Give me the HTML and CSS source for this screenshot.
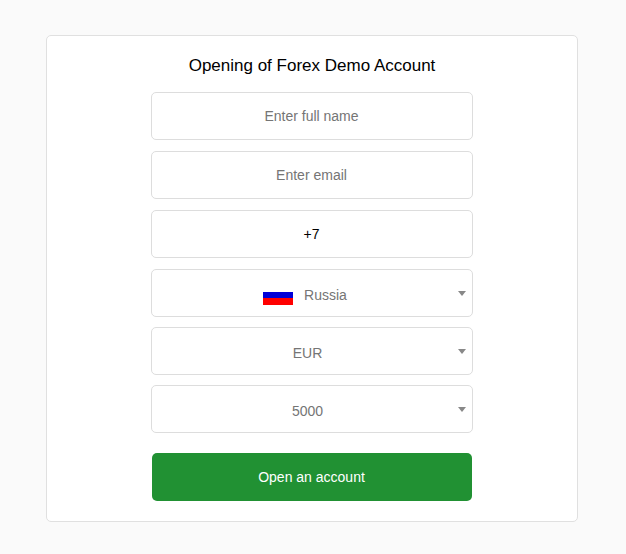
FILE: index.html
```
<!DOCTYPE html>
<html lang="en">
<head>
  <meta charset="UTF-8">
  <meta name="viewport" content="width=device-width, initial-scale=1.0">
  <title>Opening of Forex Demo Account</title>
  <link rel="stylesheet" href="styles.css">
</head>
<body>
  <div class="container">
    <h1>Opening of Forex Demo Account</h1>
    <form class="account-form">
      <input type="text" name="name" placeholder="Enter full name">
      <input type="email" name="email" placeholder="Enter email">
      <input type="tel" name="phone" value="+7">

      <div class="select select-country">
        <span class="flag"></span>
        <span class="select-text">Russia</span>
        <span class="arrow"></span>
      </div>
      <div class="select">
        <span class="select-text">EUR</span>
        <span class="arrow"></span>
      </div>
      <div class="select">
        <span class="select-text">5000</span>
        <span class="arrow"></span>
      </div>

      <button type="submit">Open an account</button>
    </form>
  </div>
</body>
</html>
```

FILE: styles.css
```
* {
  box-sizing: border-box;
}
body {
  font-family: "Liberation Sans", Arial, sans-serif;
  background-color: #fafafa;
  margin: 0;
  padding: 35px 48px 32px 46px;
}
.container {
  background-color: #fff;
  height: 487px;
  padding: 20px 104px 0;
  border: 1px solid #e0e0e0;
  border-radius: 5px;
}
h1 {
  margin: 0 0 16px;
  font-size: 17px;
  font-weight: normal;
  line-height: 20px;
  text-align: center;
  color: #000;
}
.account-form {
  display: flex;
  flex-direction: column;
}
input, .select {
  width: 322px;
  height: 48px;
  border: 1px solid #ddd;
  border-radius: 5px;
  background-color: #fff;
  font-size: 14px;
}
input {
  margin: 0 0 11px;
  padding: 0 1px 0 0;
  font-family: inherit;
  text-align: center;
  color: #000;
}
input::placeholder {
  color: #757575;
}
.select {
  display: flex;
  align-items: center;
  justify-content: center;
  position: relative;
  margin-bottom: 10px;
  padding: 4px 9px 0 0;
  color: #757575;
}
.select-country {
  padding-right: 14px;
}
.flag {
  width: 30px;
  height: 20px;
  margin-right: 11px;
  background: linear-gradient(#fff 7px, #0000d8 7px 13px, #f00 13px);
}
.arrow {
  position: absolute;
  top: 21px;
  right: 6px;
  border: 4px solid transparent;
  border-top: 5px solid #888;
  border-bottom: 0;
}
button {
  width: 320px;
  height: 48px;
  margin: 10px 1px 0;
  padding: 0 1px 0 0;
  border: none;
  border-radius: 5px;
  background-color: #219133;
  font-family: inherit;
  font-size: 14px;
  color: #fff;
  cursor: pointer;
}
```
